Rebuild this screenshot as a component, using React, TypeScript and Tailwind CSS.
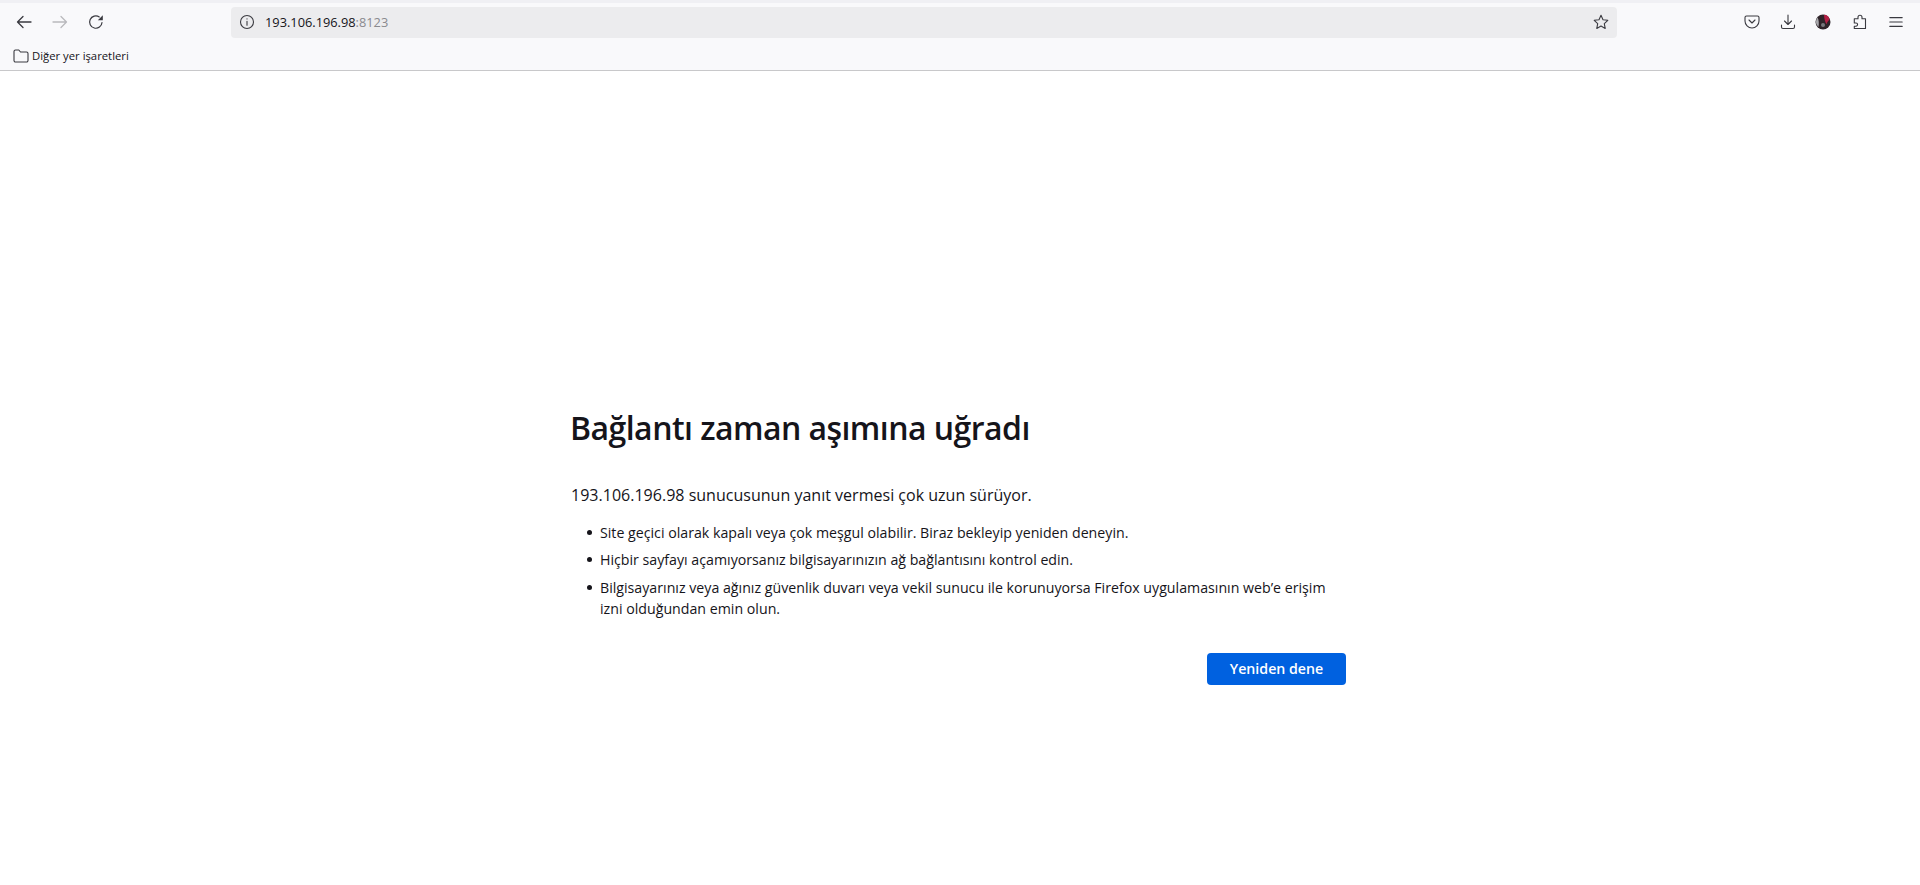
import React from "react";

const Ico = ({ children, size = 16, className = "" }: { children: React.ReactNode; size?: number; className?: string }) => (
  <svg width={size} height={size} viewBox="0 0 16 16" fill="none" stroke="currentColor" strokeWidth="1.1" strokeLinecap="round" strokeLinejoin="round" className={className}>
    {children}
  </svg>
);

const Item = ({ children, className = "" }: { children: React.ReactNode; className?: string }) => (
  <li className={`flex ${className}`}>
    <span className="mr-[8px] mt-[8px] h-[5px] w-[5px] shrink-0 rounded-full bg-[#15141a]" />
    <span>{children}</span>
  </li>
);

export default function App() {
  return (
    <div className="h-[885px] w-[1920px] overflow-hidden bg-white font-['Inter',sans-serif]">
      <div className="h-[3px] bg-[#f0f0f4]" />
      <div className="flex h-[38px] items-center bg-[#f9f9fb] text-[#3a3a40]">
        <div className="ml-[16px] flex w-[215px] items-center">
          <Ico size={16}><path d="M15 8H1.5M7 2.5 1.5 8 7 13.500" strokeWidth="1.3" /></Ico>
          <Ico size={16} className="ml-[20px] text-[#b9b9bd]"><path d="M1 8h13.500M9 2.500 14.500 8 9 13.500" strokeWidth="1.3" /></Ico>
          <Ico size={16} className="ml-[20px]">
            <path d="M14 8.500A6.200 6.200 0 1 1 11.300 2.900" strokeWidth="1.2" />
            <path d="M14.800 1.200v5h-5z" fill="currentColor" stroke="none" />
          </Ico>
        </div>
        <div className="flex h-[31px] w-[1386px] items-center rounded-[4px] bg-[#ececee]">
          <Ico size={16} className="ml-[8px]"><circle cx="8" cy="8" r="6.500" /><path d="M8 7.300v4M8 4.700v.3" /></Ico>
          <div className="ml-[10px] pt-[1px] font-['Open_Sans',sans-serif] text-[12.800px] text-[#15141a]">193.106.196.98<span className="text-[#8a8a8e]">:8123</span></div>
          <Ico size={16} className="ml-auto mr-[8px]"><path d="M8 1.300 10 5.700l4.800.6-3.500 3.300.9 4.800L8 12.100l-4.200 2.300.9-4.800L1.200 6.300 6 5.700z" /></Ico>
        </div>
        <div className="ml-[127px] flex items-center">
          <Ico size={16}><path d="M2.500 2h11A1.500 1.500 0 0 1 15 3.500V7a7 7 0 0 1-14 0V3.500A1.500 1.500 0 0 1 2.500 2zM5 6l3 3 3-3" /></Ico>
          <Ico size={16} className="ml-[20px]"><path d="M8 1v9.500M4.500 7 8 10.500 11.500 7M1.500 11v2a1.500 1.500 0 0 0 1.500 1.500h10a1.500 1.500 0 0 0 1.500-1.500v-2" /></Ico>
          <svg width="16" height="16" viewBox="0 0 16 16" className="ml-[19px]">
            <circle cx="8" cy="8" r="7.500" fill="#2e2328" />
            <path d="M9 .8c3 0 5 1.500 5.500 4.500-1 1.500-2.500 3-3 5C10 8 9 4 9 .8z" fill="#b31f44" />
            <path d="M1 8c0-2 .5-3 1.500-4.500C4 6 4 10 3.500 13 2 11.500 1 10 1 8z" fill="#a9a9ad" />
            <circle cx="8" cy="11" r="2" fill="#77777b" />
          </svg>
          <Ico size={16} className="ml-[21px]"><path d="M2.300 4.700H6V3.200a2 2 0 0 1 4 0v1.500h3.500v9.800H2.300v-2.300H4a1.600 1.600 0 0 0 0-3.200H2.300z" /></Ico>
          <Ico size={16} className="ml-[20px]"><path d="M1.800 3.600h12.400M1.800 8h12.400M1.800 12.400h12.400" /></Ico>
        </div>
      </div>
      <div className="flex h-[30px] items-center border-b border-[#c8c8ca] bg-[#f9f9fb] pl-[13px]">
        <Ico size={16} className="text-[#3a3a40]"><path d="M1 12.500v-9A1.500 1.500 0 0 1 2.500 2h3.300L7.500 4h6A1.500 1.500 0 0 1 15 5.500v7a1.500 1.500 0 0 1-1.500 1.500h-11A1.500 1.500 0 0 1 1 12.500z" /></Ico>
        <span className="ml-[3px] pt-[1px] font-['Open_Sans',sans-serif] text-[11.300px] text-[#15141a]">Diğer yer işaretleri</span>
      </div>
      <div className="ml-[571px] w-[775px] pt-[333px] font-['Open_Sans',sans-serif] text-[#15141a]">
        <h1 className="-ml-[1px] text-[32px] font-semibold leading-[48px] tracking-[-0.55px]">Bağlantı zaman aşımına uğradı</h1>
        <p className="mt-[31px] text-[16.050px] leading-[24px]">193.106.196.98 sunucusunun yanıt vermesi çok uzun sürüyor.</p>
        <ul className="mt-[15px] pl-[16px] text-[14.200px] leading-[21px]">
          <Item className="mb-[6px]">Site geçici olarak kapalı veya çok meşgul olabilir. Biraz bekleyip yeniden deneyin.</Item>
          <Item className="mb-[7px]">Hiçbir sayfayı açamıyorsanız bilgisayarınızın ağ bağlantısını kontrol edin.</Item>
          <Item>Bilgisayarınız veya ağınız güvenlik duvarı veya vekil sunucu ile korunuyorsa Firefox uygulamasının web’e erişim izni olduğundan emin olun.</Item>
        </ul>
        <div className="mt-[34px] flex justify-end">
          <button className="h-[32px] w-[139px] rounded-[4px] bg-[#0061e0] text-[14.200px] font-semibold text-white">Yeniden dene</button>
        </div>
      </div>
    </div>
  );
}
